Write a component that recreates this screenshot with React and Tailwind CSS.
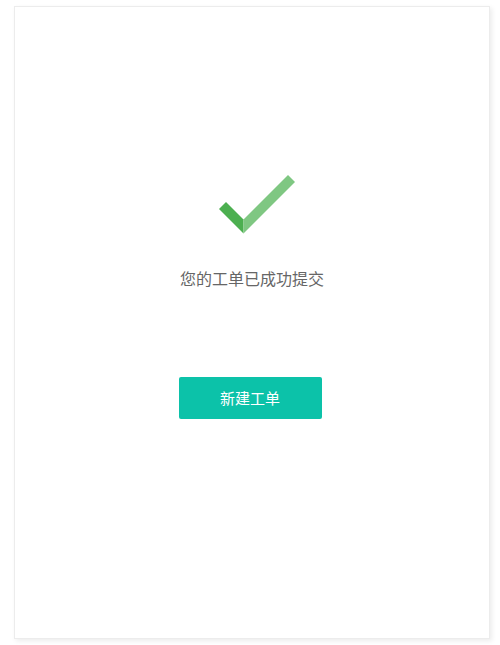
import React from 'react';

const CheckMark = () => (
  <svg width="96" height="64" viewBox="204 172 96 64" className="block">
    {/* short arm */}
    <polygon points="219,209 226,202 243.5,219.5 243.5,233.5" fill="#4caf50" />
    {/* long arm */}
    <polygon points="243.5,219.5 288,175 295,182 243.5,233.5" fill="#7fc782" />
  </svg>
);

const App = () => {
  return (
    <div className="w-[500px] h-[645px] bg-white pt-[6px] pl-[14px]">
      <div
        className="w-[476px] h-[633px] bg-white border border-[#ececec] shadow-[2px_2px_5px_rgba(0,0,0,0.08)] flex flex-col items-center pt-[165px]"
        style={{ fontFamily: '"Noto Sans CJK SC", "Liberation Sans", sans-serif' }}
      >
        <CheckMark />
        <p className="mt-[30px] text-[16px] leading-6 text-[#666]">您的工单已成功提交</p>
        <button className="mt-[87px] mr-[4px] w-[143px] h-[42px] rounded-[2px] bg-[#0cc2a9] text-white text-[15px]">
          新建工单
        </button>
      </div>
    </div>
  );
};

export default App;
